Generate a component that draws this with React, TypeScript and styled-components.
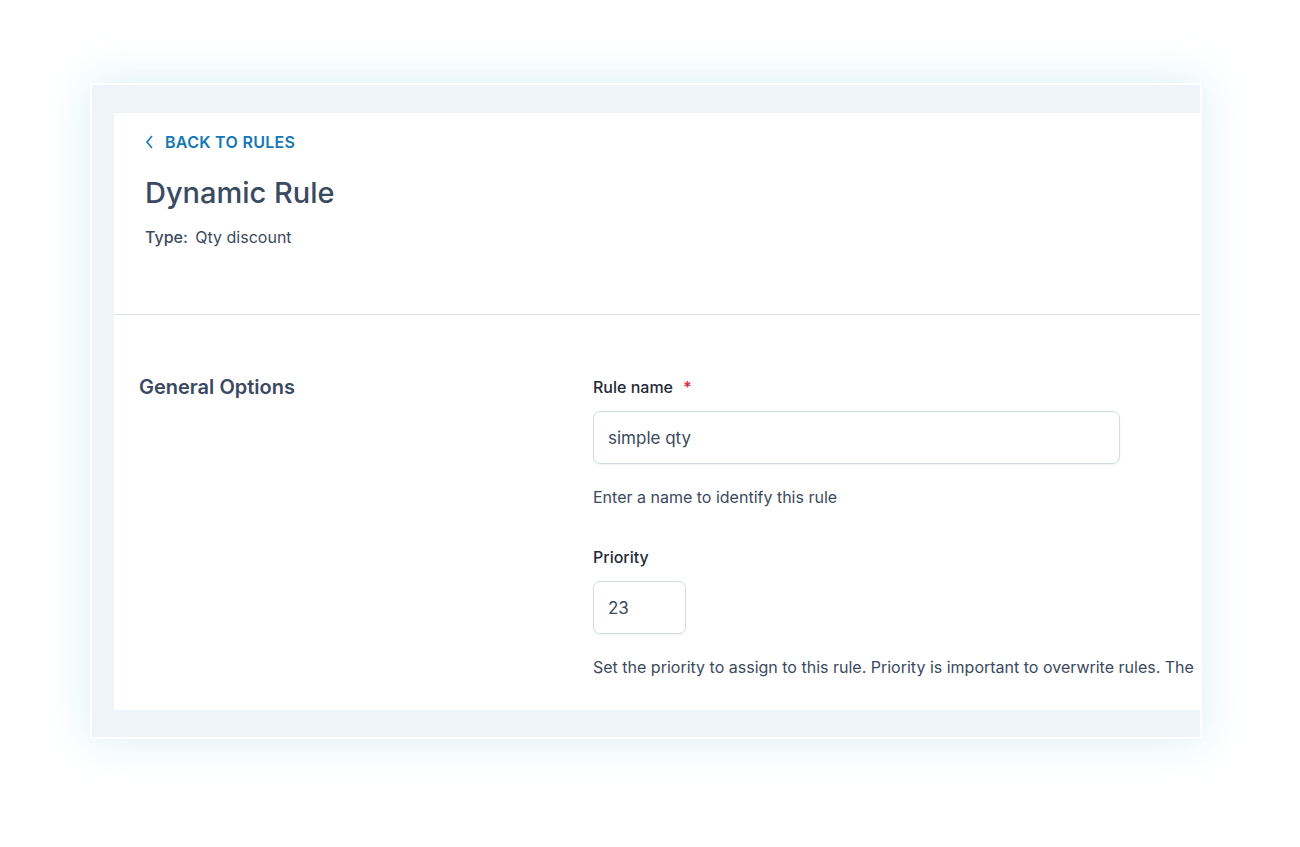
import styled, { createGlobalStyle } from 'styled-components'

const Global = createGlobalStyle`
  body { margin: 0; background: #fff; font-family: Inter, "Noto Sans", sans-serif; }
`

export default function App() {
  return (
    <Page>
      <Global />
      <Frame>
        <Panel>
          <Head>
            <Back>
              <svg width="10" height="16" viewBox="0 0 10 16"><path d="M7 2 L2 8 L7 14" fill="none" stroke="#1578b4" strokeWidth="1.6" /></svg>
              BACK TO RULES
            </Back>
            <Title>Dynamic Rule</Title>
            <Type><b>Type:</b> Qty discount</Type>
          </Head>
          <Body>
            <Section>General Options</Section>
            <Fields>
              <Label>Rule name <Req>*</Req></Label>
              <Input width={527}>simple qty</Input>
              <Help>Enter a name to identify this rule</Help>
              <Label style={{ marginTop: 40 }}>Priority</Label>
              <Input width={93}>23</Input>
              <Help>Set the priority to assign to this rule. Priority is important to overwrite rules. The</Help>
            </Fields>
          </Body>
        </Panel>
      </Frame>
    </Page>
  )
}

const Page = styled.div`
  width: 1300px;
  height: 847px;
  padding: 83px 0 0 90px;
  box-sizing: border-box;
  overflow: hidden;
`
const Frame = styled.div`
  width: 1112px;
  height: 656px;
  box-sizing: border-box;
  border: 2px solid #fff;
  background: #eff4fb;
  padding: 28px 0 27px 22px;
  box-shadow: 0 0 40px rgba(170, 220, 230, 0.45);
`
const Panel = styled.div`
  background: #fff;
  height: 100%;
  overflow: hidden;
  white-space: nowrap;
`
const Head = styled.div`
  padding: 19px 31px 0;
  height: 182px;
  border-bottom: 1px solid #dfe3e8;
`
const Back = styled.div`
  display: flex;
  align-items: center;
  gap: 10px;
  color: #1578b4;
  font-weight: 600;
  font-size: 16px;
  letter-spacing: 0.3px;
`
const Title = styled.div`
  margin-top: 23px;
  font-size: 29px;
  color: #3a4a60;
  font-weight: 500;
`
const Type = styled.div`
  margin-top: 17px;
  font-size: 16px;
  color: #3a4a60;
  b { font-weight: 500; margin-right: 3px; }
`
const Body = styled.div`
  display: flex;
  padding: 60px 0 0 25px;
`
const Section = styled.div`
  width: 454px;
  font-size: 20px;
  font-weight: 600;
  color: #3a4a60;
`
const Fields = styled.div`
  display: flex;
  flex-direction: column;
  padding-top: 2px;
`
const Label = styled.div`
  font-size: 16px;
  font-weight: 500;
  color: #1f2937;
  height: 20px;
`
const Req = styled.span`
  color: #e3173e;
  margin-left: 6px;
`
const Input = styled.div<{ width: number }>`
  width: ${p => p.width}px;
  height: 53px;
  box-sizing: border-box;
  margin-top: 14px;
  border: 1px solid #d3dbe3;
  border-radius: 7px;
  padding: 0 14px;
  display: flex;
  align-items: center;
  font-size: 17px;
  color: #3a4a60;
  box-shadow: 0 1px 2px rgba(0,0,0,0.05);
`
const Help = styled.div`
  margin-top: 23px;
  font-size: 16px;
  color: #3a4a60;
`
